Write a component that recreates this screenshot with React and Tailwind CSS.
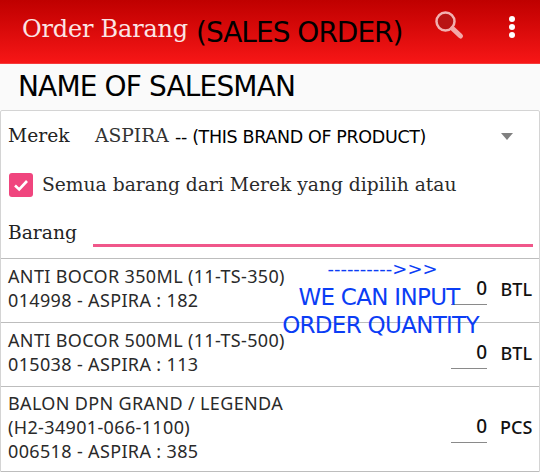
const serif = "font-['DejaVu_Serif',serif]";
const sans = "font-['Noto_Sans',sans-serif]";
const note = "font-['DejaVu_Sans',sans-serif]";

function Row({ lines, qty, unit, h }) {
  return (
    <div className={`flex items-center pl-[7px] pr-[7px] border-b border-[#bdbdbd] ${h}`}>
      <div className={`flex-1 ${sans} text-[18px] leading-[24px] text-[#2a2a2a] tracking-[0.35px] -mt-[5px]`}>
        {lines.map((l) => (
          <div key={l} className="whitespace-nowrap">{l}</div>
        ))}
      </div>
      <div className="w-9 border-b border-[#8a8a8a] text-right h-[30px] mr-[13px] -mt-[2px]">
        <span className={`${sans} text-[19px] leading-[26px] font-medium text-[#111]`}>{qty}</span>
      </div>
      <div className={`w-[32px] text-right ${sans} text-[18px] font-medium text-[#111] -mt-[3px]`}>{unit}</div>
    </div>
  );
}

export default function App() {
  return (
    <div className="relative w-[540px] h-[472px] overflow-hidden bg-[#fafafa]">
      <header className="h-[64px] flex items-center bg-gradient-to-b from-[#bf0000] to-[#f71616] pl-[22px] pr-[22px] border-b border-[#f53a3a]">
        <span className={`${serif} text-[24px] text-[#fbe4e4] whitespace-nowrap -mt-[6px] w-[174px] tracking-[-0.2px]`}>Order Barang</span>
        <span className={`${note} text-[28px] text-black whitespace-nowrap mt-[2px] tracking-[-1px]`}>(SALES ORDER)</span>
        <div className="flex-1" />
        <svg width="34" height="34" viewBox="0 0 34 34" className="mr-[43px] -mt-[14px]">
          <circle cx="13.5" cy="13.5" r="9" fill="#b81414" stroke="#f2b0b0" strokeWidth="2.5" />
          <path d="M20.5 20.5 L28.5 28" stroke="#f3a8a8" strokeWidth="5" strokeLinecap="round" />
        </svg>
        <div className="flex flex-col gap-[2px] -mt-[9px] mr-[3px]">
          <span className="w-[6px] h-[6px] rounded-full bg-white" />
          <span className="w-[6px] h-[6px] rounded-full bg-white" />
          <span className="w-[6px] h-[6px] rounded-full bg-white" />
        </div>
      </header>

      <div className="h-[46px] flex items-center pl-[18px]">
        <span className={`${note} text-[28px] text-black whitespace-nowrap tracking-[-0.85px]`}>NAME OF SALESMAN</span>
      </div>

      <main className="bg-white border border-[#d4d4d4] rounded-t-[2px] h-[362px]">
        <div className="h-[148px] px-[7px] border-b border-[#bdbdbd]">
          <div className="flex items-center h-[51px] relative">
            <span className={`${serif} text-[18.7px] text-[#222] w-[87px]`}>Merek</span>
            <span className={`${serif} text-[18.7px] text-[#333] w-[71px] whitespace-nowrap`}>ASPIRA</span>
            <span className={`${note} text-[17.5px] text-black ml-[9px] mt-[2px] whitespace-nowrap tracking-[-0.35px]`}>-- (THIS BRAND OF PRODUCT)</span>
            <div className="absolute right-[19px] top-[22px] w-0 h-0 border-l-[6px] border-r-[6px] border-t-[7px] border-l-transparent border-r-transparent border-t-[#808080]" />
          </div>
          <div className="flex items-center h-[46px]">
            <div className="w-6 h-6 rounded-[3px] bg-[#f0457e] flex items-center justify-center ml-[1px]">
              <svg width="18" height="18" viewBox="0 0 18 18">
                <path d="M3 9.5 L7.2 13.5 L15 5" fill="none" stroke="white" strokeWidth="2.6" />
              </svg>
            </div>
            <span className={`${serif} text-[18.7px] text-[#2a2a2a] ml-[9px] mt-[1px] whitespace-nowrap`}>Semua barang dari Merek yang dipilih atau</span>
          </div>
          <div className="flex h-[51px]">
            <span className={`${serif} text-[18.7px] text-[#222] w-[85px] mt-[11px] h-[28px]`}>Barang</span>
            <div className="flex-1 h-[39px] border-b-[3px] border-[#f0578a] -mr-[1px]" />
          </div>
        </div>

        <Row h="h-[64px]" lines={["ANTI BOCOR 350ML (11-TS-350)", "014998 - ASPIRA : 182"]} qty="0" unit="BTL" />
        <Row h="h-[64px]" lines={["ANTI BOCOR 500ML (11-TS-500)", "015038 - ASPIRA : 113"]} qty="0" unit="BTL" />
        <Row h="h-[85px]" lines={["BALON DPN GRAND / LEGENDA", "(H2-34901-066-1100)", "006518 - ASPIRA : 385"]} qty="0" unit="PCS" />
      </main>

      <div className={`absolute left-[282px] top-[257px] w-[197px] text-center ${note} text-[#0b3df5] text-[23px] leading-[28px] whitespace-nowrap tracking-[-0.7px]`}>
        <div className="text-[18px] leading-[23px] tracking-[0px] pl-[4px]">---------->>></div>
        <div className="-ml-[3px] mt-[3px]">WE CAN INPUT</div>
        <div>ORDER QUANTITY</div>
      </div>
    </div>
  );
}
